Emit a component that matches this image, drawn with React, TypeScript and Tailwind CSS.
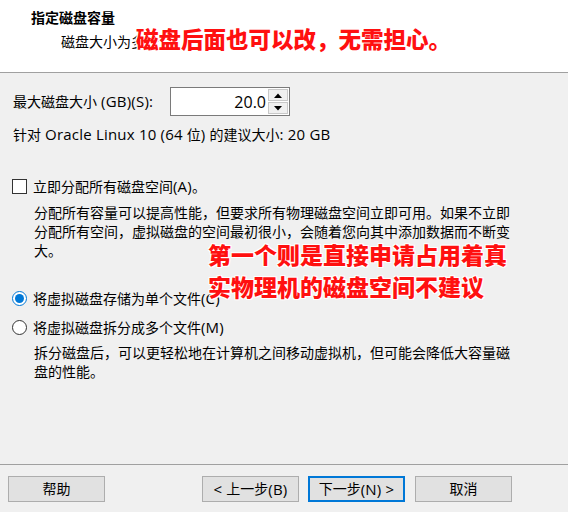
import React from "react";

const redText =
  "absolute font-['Noto_Sans_CJK_SC',sans-serif] font-black text-[#ff1010] whitespace-nowrap [text-shadow:0_0_2px_#fff,0_0_2px_#fff,1px_1px_0_#fff,-1px_-1px_0_#fff,1px_-1px_0_#fff,-1px_1px_0_#fff]";

function L({ children }: { children: React.ReactNode }) {
  return <span className="text-[15px] font-['Open_Sans',sans-serif] tracking-[0.2px]">{children}</span>;
}

function Btn({ children, primary }: { children: React.ReactNode; primary?: boolean }) {
  return (
    <div
      className={
        "w-[97px] h-[26px] flex items-center justify-center bg-[#e1e1e1] text-[14px] text-black whitespace-pre " +
        (primary ? "border-2 border-[#0078d7]" : "border border-[#adadad]")
      }
    >
      {children}
    </div>
  );
}

export default function App() {
  return (
    <div className="relative w-[568px] h-[512px] bg-[#f0f0f0] flex flex-col overflow-hidden text-black font-['Open_Sans','Noto_Sans_CJK_SC',sans-serif] text-[14px] leading-[20px]">
      {/* header */}
      <div className="h-[73px] bg-white border-b border-[#a0a0a0] flex flex-col">
        <div className="pl-[31px] pt-[7px] font-bold font-['Noto_Sans_CJK_SC',sans-serif] text-[14px] leading-[20px]">
          指定磁盘容量
        </div>
        <div className="pl-[61px] pt-[4px] font-['Noto_Sans_CJK_SC',sans-serif] text-[14px] leading-[20px]">
          磁盘大小为多少
        </div>
      </div>

      {/* body */}
      <div className="flex flex-col pl-[13px] pr-[13px]">
        <div className="mt-[14px] h-[29px] flex items-center">
          <span className="w-[157px] whitespace-pre">
            最大磁盘大小<L> (GB)(S):</L>
          </span>
          <div className="w-[120px] h-[29px] bg-white border border-[#7a7a7a] flex items-center">
            <span className="flex-1 text-right pr-[2px] text-[16px] font-['Open_Sans',sans-serif]">20.0</span>
            <div className="w-[20px] h-[25px] flex flex-col mr-[1px] gap-[1px]">
              <div className="flex-1 bg-[#f0f0f0] border border-[#c8c8c8] flex items-center justify-center">
                <svg width="8" height="5" viewBox="0 0 8 5">
                  <path d="M0 5 L4 0.5 L8 5 Z" fill="#000" />
                </svg>
              </div>
              <div className="flex-1 bg-[#f0f0f0] border border-[#c8c8c8] flex items-center justify-center">
                <svg width="8" height="5" viewBox="0 0 8 5">
                  <path d="M0 0 L4 4.5 L8 0 Z" fill="#000" />
                </svg>
              </div>
            </div>
          </div>
        </div>

        <div className="mt-[8px] whitespace-pre">
          针对<L> Oracle Linux 10 (64 </L>位<L>) </L>的建议大小<L>: 20 GB</L>
        </div>

        <div className="mt-[31px] flex items-center h-[20px]">
          <div className="w-[15px] h-[15px] border border-[#333] bg-white ml-[-1px]" />
          <span className="ml-[6px]">
            立即分配所有磁盘空间<L>(A)</L>。
          </span>
        </div>

        <div className="mt-[7px] ml-[21px] w-[480px] leading-[19px]">
          分配所有容量可以提高性能，但要求所有物理磁盘空间立即可用。如果不立即分配所有空间，虚拟磁盘的空间最初很小，会随着您向其中添加数据而不断变大。
        </div>

        <div className="mt-[28px] flex items-center h-[20px]">
          <div className="w-[15px] h-[15px] rounded-full border border-[#0078d7] bg-white flex items-center justify-center ml-[-1px]">
            <div className="w-[9px] h-[9px] rounded-full bg-[#0078d7]" />
          </div>
          <span className="ml-[6px]">
            将虚拟磁盘存储为单个文件<L>(C)</L>
          </span>
        </div>

        <div className="mt-[9px] flex items-center h-[20px]">
          <div className="w-[15px] h-[15px] rounded-full border border-[#333] bg-white ml-[-1px]" />
          <span className="ml-[6px]">
            将虚拟磁盘拆分成多个文件<L>(M)</L>
          </span>
        </div>

        <div className="mt-[6px] ml-[21px] w-[480px] leading-[19px]">
          拆分磁盘后，可以更轻松地在计算机之间移动虚拟机，但可能会降低大容量磁盘的性能。
        </div>
      </div>

      <div className="flex-1" />

      {/* footer */}
      <div className="h-[48px] border-t border-[#a0a0a0] flex items-start pt-[11px] pl-[8px]">
        <Btn>帮助</Btn>
        <div className="ml-[97px]">
          <Btn>
            <L>{"< "}</L>上一步<L>(B)</L>
          </Btn>
        </div>
        <div className="ml-[9px]">
          <Btn primary>
            下一步<L>{"(N) >"}</L>
          </Btn>
        </div>
        <div className="ml-[10px]">
          <Btn>取消</Btn>
        </div>
      </div>

      {/* overlays */}
      <div className={redText + " left-[136px] top-[22px] text-[22.5px] leading-[32px]"}>
        磁盘后面也可以改，无需担心。
      </div>
      <div className={redText + " left-[208px] top-[238px] text-[23px] leading-[32px]"}>
        第一个则是直接申请占用着真
        <br />
        实物理机的磁盘空间不建议
      </div>
    </div>
  );
}
